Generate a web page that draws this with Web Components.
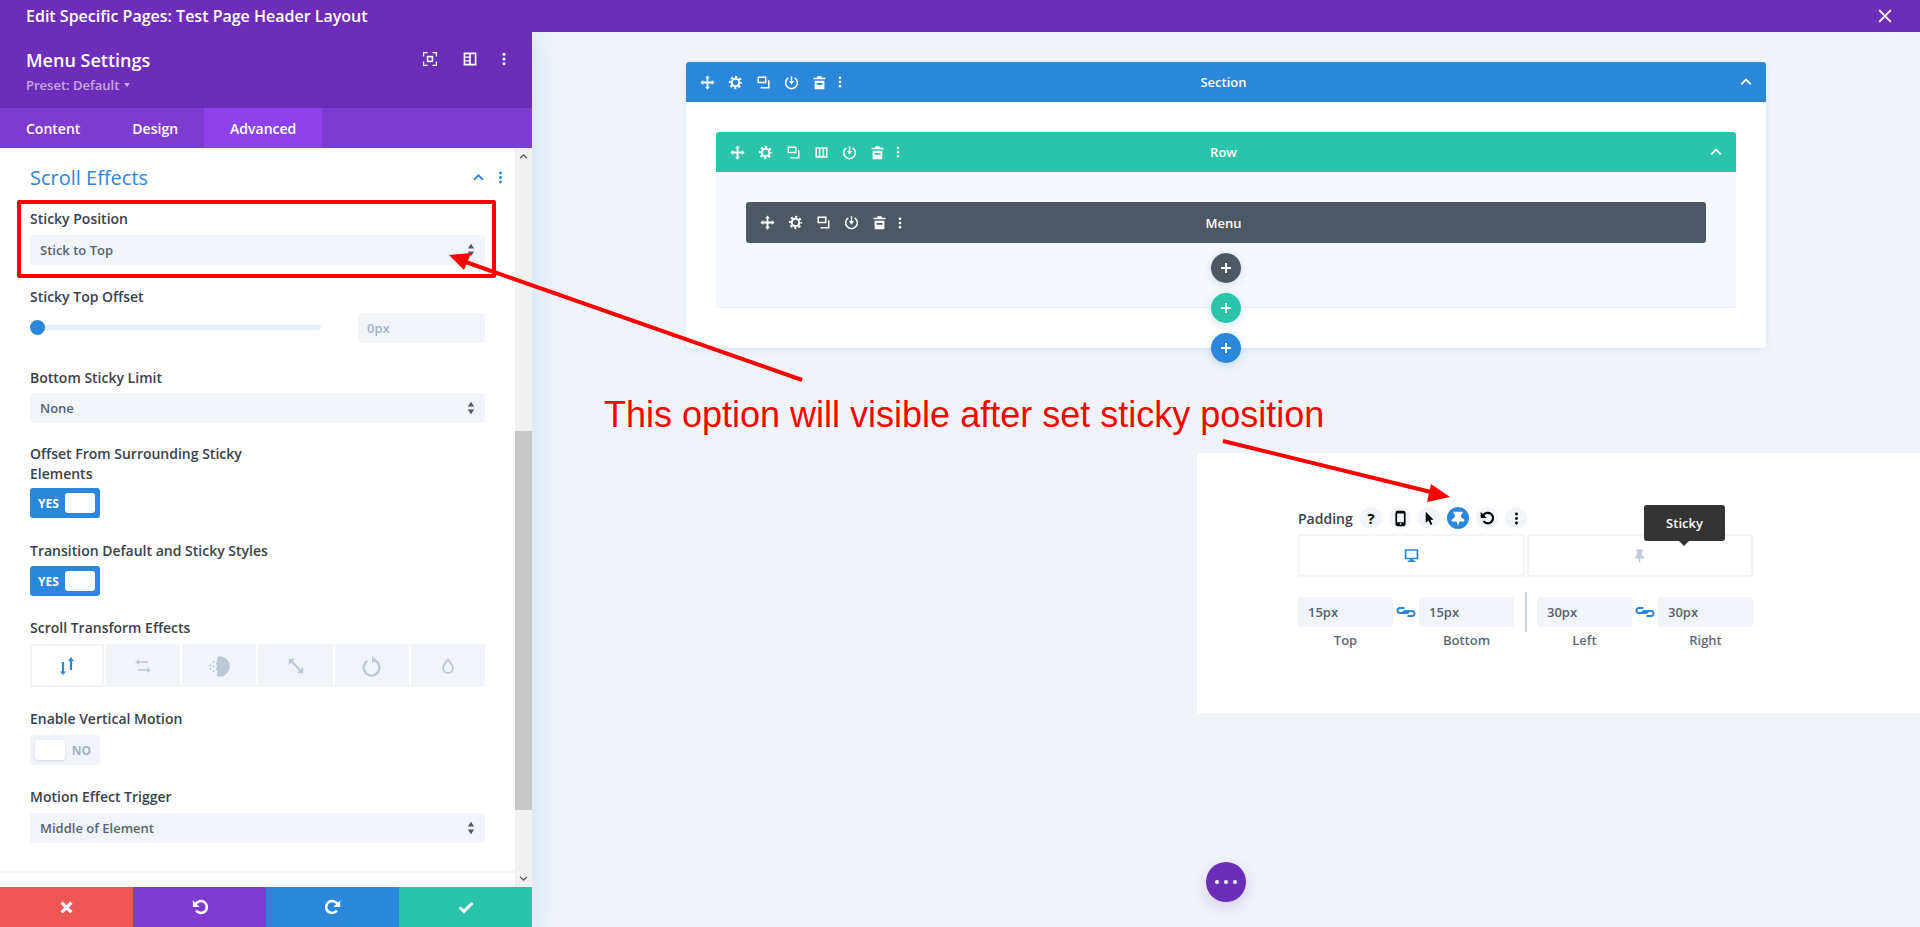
<!DOCTYPE html>
<html>
<head>
<meta charset="utf-8">
<title>Menu Settings</title>
<style>
  html, body { margin: 0; padding: 0; height: 100%; overflow: hidden; }
  body { font-family: "Open Sans", "Liberation Sans", sans-serif; font-size: 13px; color: #32373c; background: #f0f4f9; }
</style>
</head>
<body>
<dv-app></dv-app>

<script>
// icon shapes, all drawn on a 20x20 box
const ICONS = {
  move: `<path d="M10 .5l3.200 3.800h-2V8.800h4.500v-2L19.500 10l-3.800 3.200v-2h-4.500v4.500h2L10 19.500l-3.200-3.800h2v-4.500H4.300v2L.5 10l3.800-3.200v2h4.500V4.300h-2z"/>`,
  gear: `<circle cx="10" cy="10" r="5" fill="none" stroke="currentColor" stroke-width="2.700"/><circle cx="10" cy="10" r="7.500" fill="none" stroke="currentColor" stroke-width="2.800" stroke-dasharray="2.900 2.990" stroke-dashoffset="1.450"/>`,
  copy: `<path fill-rule="evenodd" d="M2 2h12v9H2zM4 4v5h8V4z"/><path d="M16 7h2v11H6v-2h10z"/>`,
  power: `<path fill="none" stroke="currentColor" stroke-width="2" d="M5.800 3.800a7.800 7.800 0 1 0 8.400 0"/><path d="M9 1.500h2V8h2.500L10 13 6.500 8H9z"/>`,
  trash: `<path d="M7 1.500h6v2h5v2.200H2V3.500h5z"/><path fill-rule="evenodd" d="M3.500 7.500h13V19h-13zM6 10.500V13h8v-2.500z"/>`,
  dots: `<circle cx="10" cy="4" r="1.900"/><circle cx="10" cy="10" r="1.900"/><circle cx="10" cy="16" r="1.900"/>`,
  columns: `<path fill-rule="evenodd" d="M2 3h16v14H2zM4 5v10h2.500V5zM8.500 5v10h3V5zM13.500 5v10H16V5z"/>`,
  up: `<path fill="none" stroke="currentColor" stroke-width="2.400" d="M4 13l6-6 6 6"/>`,
  down: `<path fill="none" stroke="currentColor" stroke-width="2.400" d="M4 7l6 6 6-6"/>`,
  focus: `<path fill="none" stroke="currentColor" stroke-width="1.600" d="M7 2H2v5M13 2h5v5M7 18H2v-5M13 18h5v-5"/><rect x="7" y="7" width="6" height="6" fill="none" stroke="currentColor" stroke-width="2"/>`,
  split: `<path fill-rule="evenodd" d="M2 2h16v16H2zM4 4v3h5V4zM4 8.500v3h5v-3zM4 13v3h5v-3zM11 4v12h5V4z"/>`,
  close: `<path fill="none" stroke="currentColor" stroke-width="2" d="M3.500 3.500l13 13M16.500 3.500l-13 13"/>`,
  x: `<path fill="none" stroke="currentColor" stroke-width="4.400" d="M3.500 3.500l13 13M16.500 3.500l-13 13"/>`,
  undo: `<path fill="none" stroke="currentColor" stroke-width="3.200" d="M4.500 6.500a7.500 7.500 0 1 1 .6 8"/><path d="M1 1.500l0 8.500h8.500z"/>`,
  redo: `<path fill="none" stroke="currentColor" stroke-width="3.200" d="M15.500 6.500a7.500 7.500 0 1 0-.6 8"/><path d="M19 1.500V10h-8.500z"/>`,
  check: `<path fill="none" stroke="currentColor" stroke-width="3.800" d="M2 10.500l5.500 5L18 5"/>`,
  updown: `<path d="M4.900 6h2.200v9.500H9L6 19 3 15.500h1.900z"/><path d="M12.900 5H11l3-4 3 4h-1.900v9h-2.200z"/>`,
  leftright: `<path d="M2 6l4-3v2.200h9v1.600H6V9z"/><path d="M18 14l-4 3v-2.200H5v-1.600h9V11z"/>`,
  fade: `<path d="M10 1a9 9 0 0 1 0 18c-1.500 0-2.500-1-2.500-2.200 0-1 .8-1.300.8-2.300s-1.300-1-1.300-2.200.8-1.300.8-2.300-.8-1.200-.8-2.300.8-1.300.8-2.300S8 3.300 8 2.500 9 1 10 1z"/><g><circle cx="4.800" cy="6" r=".9"/><circle cx="2" cy="9" r=".9"/><circle cx="4.800" cy="10" r="1"/><circle cx="2" cy="12" r=".9"/><circle cx="4.800" cy="14" r="1"/></g>`,
  scale: `<path fill="none" stroke="currentColor" stroke-width="2.400" d="M4.500 4.500l11 11"/><path d="M2 2h7L2 9zM18 18h-7l7-7z"/>`,
  rotate: `<path fill="none" stroke="currentColor" stroke-width="2.200" d="M6 4.800a7.500 7.500 0 1 0 5.500-1"/><path d="M10.500 0v7l4-3.500z"/>`,
  drop: `<path fill="none" stroke="currentColor" stroke-width="2" d="M10 2.500c3 4 5.500 6.800 5.500 9.800a5.500 5.500 0 0 1-11 0c0-3 2.500-5.800 5.500-9.800z"/>`,
  phone: `<path fill-rule="evenodd" d="M6.500 1h7A2.500 2.500 0 0 1 16 3.500v13a2.500 2.500 0 0 1-2.500 2.500h-7A2.500 2.500 0 0 1 4 16.500v-13A2.500 2.500 0 0 1 6.500 1zM6 4v10.500h8V4zM10 15.300a1 1 0 1 0 0 2 1 1 0 0 0 0-2z"/>`,
  cursor: `<path d="M5 1l10.500 10.500h-4.300l2.500 6-2.400 1-2.500-6L5 15.500z"/>`,
  pin: `<path d="M5.500 2h9v2l-1.500 1v4l3 3v2h-5v5h-2v-5H4v-2l3-3V5L5.500 4z"/>`,
  pinfat: `<path d="M5 3h10v2l-1.500 1v3l3.500 3v2h-5.500L10 18.500 8.500 14H3v-2l3.500-3V6L5 5z"/>`,
  monitor: `<path fill-rule="evenodd" d="M2 2.500h16v12h-6v1.500h2.500v1.500h-9V16H8v-1.500H2zM4 4.500v8h12v-8z"/>`,
  link: `<path fill="none" stroke="currentColor" stroke-width="2" d="M8.500 6H4a2.500 2.500 0 0 0 0 5h6.500a2.500 2.500 0 0 0 2.500-2"/><path fill="none" stroke="currentColor" stroke-width="2" d="M11.500 14H16a2.500 2.500 0 0 0 0-5H9.500A2.500 2.500 0 0 0 7 11"/>`,
  updownsmall: `<path d="M10 1l4.500 7h-9zM10 19l-4.500-7h9z"/>`
};

class DvIcon extends HTMLElement {
  constructor() {
    super();
    this.shadowDOM = this.attachShadow({mode: "open"});
  }
  connectedCallback() {
    const size = this.getAttribute("size") || 16;
    this.shadowDOM.innerHTML = `
      <style>
        :host { display: inline-flex; width: ${size}px; height: ${size}px; flex: none; }
        svg { display: block; width: 100%; height: 100%; fill: currentColor; }
      </style>
      <svg viewBox="0 0 20 20">${ICONS[this.getAttribute("name")]}</svg>`;
  }
}
customElements.define("dv-icon", DvIcon);

// top purple strip
class DvTitlebar extends HTMLElement {
  constructor() {
    super();
    this.shadowDOM = this.attachShadow({mode: "open"});
    this.shadowDOM.innerHTML = `
      <style>
        :host { display: flex; align-items: center; justify-content: space-between; height: 32px; padding: 0 26px;
                background: #6c2eb9; color: #fff; font-size: 16px; font-weight: 600; position: relative; z-index: 3; }
      </style>
      <slot></slot>
      <dv-icon name="close" size="18"></dv-icon>`;
  }
}
customElements.define("dv-titlebar", DvTitlebar);

class DvField extends HTMLElement {
  constructor() {
    super();
    this.shadowDOM = this.attachShadow({mode: "open"});
    this.shadowDOM.innerHTML = `
      <style>
        :host { display: block; }
        label { display: block; font-size: 14px; font-weight: 600; line-height: 20px; color: #3a4149; }
        div { margin-top: var(--gap, 6px); }
      </style>
      <label><slot name="label"></slot></label>
      <div><slot></slot></div>`;
  }
}
customElements.define("dv-field", DvField);

class DvSelect extends HTMLElement {
  constructor() {
    super();
    this.shadowDOM = this.attachShadow({mode: "open"});
    this.shadowDOM.innerHTML = `
      <style>
        :host { display: flex; align-items: center; justify-content: space-between; height: 30px; padding: 0 7px 0 10px;
                background: #f1f5f9; border-radius: 3px; color: #566270; font-size: 13px; font-weight: 600; }
      </style>
      <slot></slot>
      <dv-icon name="updownsmall" size="14" style="color:#4c5866"></dv-icon>`;
  }
}
customElements.define("dv-select", DvSelect);

class DvRange extends HTMLElement {
  constructor() {
    super();
    this.shadowDOM = this.attachShadow({mode: "open"});
    this.shadowDOM.innerHTML = `
      <style>
        :host { display: flex; align-items: center; justify-content: space-between; height: 30px; }
        .track { width: 291px; height: 5px; margin-top: -2px; border-radius: 3px; background: #e9eff6; display: flex; align-items: center; }
        .thumb { width: 15px; height: 15px; border-radius: 50%; background: #2b87da; }
        .val { width: 127px; height: 30px; box-sizing: border-box; padding: 0 9px; line-height: 31px; background: #f1f5f9;
               border-radius: 3px; color: #a3b0c2; font-size: 13px; font-weight: 600; }
      </style>
      <div class="track"><div class="thumb"></div></div>
      <div class="val"><slot></slot></div>`;
  }
}
customElements.define("dv-range", DvRange);

class DvToggle extends HTMLElement {
  constructor() {
    super();
    this.shadowDOM = this.attachShadow({mode: "open"});
  }
  connectedCallback() {
    const on = this.hasAttribute("on");
    this.shadowDOM.innerHTML = `
      <style>
        :host { display: flex; align-items: center; width: 70px; height: 30px; box-sizing: border-box; padding: 5px;
                border-radius: 3px; font-size: 12px; font-weight: 700;
                justify-content: space-between; flex-direction: ${on ? "row" : "row-reverse"};
                background: ${on ? "#2b87da" : "#f1f5f9"}; color: ${on ? "#fff" : "#a3b0c2"}; }
        span { padding: ${on ? "0 0 0 3px" : "0 4px 0 0"}; }
        i { display: block; width: 30px; height: 20px; border-radius: 3px; background: #fff;
            box-shadow: ${on ? "none" : "0 1px 3px rgba(0,0,0,.12)"}; }
      </style>
      <span><slot></slot></span><i></i>`;
  }
}
customElements.define("dv-toggle", DvToggle);

class DvEffectTabs extends HTMLElement {
  constructor() {
    super();
    this.shadowDOM = this.attachShadow({mode: "open"});
    const names = [["updown", 20], ["leftright", 20], ["fade", 23], ["scale", 18], ["rotate", 21], ["drop", 18]];
    this.shadowDOM.innerHTML = `
      <style>
        :host { display: grid; grid-template-columns: repeat(6, 1fr); column-gap: 2px; border-bottom: 2px solid #f1f5f9; }
        div { height: 41px; background: #f1f5f9; color: #bdc9d8; display: flex; align-items: center; justify-content: center; padding-top: 3px; box-sizing: border-box; }
        div.on { background: #fff; color: #2b87da; border: 2px solid #f1f5f9; border-bottom: 0; padding-top: 1px; }
      </style>
      ${names.map((n, i) => `<div class="${i == 0 ? "on" : ""}"><dv-icon name="${n[0]}" size="${n[1]}"></dv-icon></div>`).join("")}`;
  }
}
customElements.define("dv-effect-tabs", DvEffectTabs);

class DvScrollbar extends HTMLElement {
  constructor() {
    super();
    this.shadowDOM = this.attachShadow({mode: "open"});
    this.shadowDOM.innerHTML = `
      <style>
        :host { display: flex; flex-direction: column; width: 17px; flex: none; background: #f1f1f1; color: #505050; position: relative; }
        .btn { height: 17px; display: flex; align-items: center; justify-content: center; background: #f1f1f1; }
        .rail { flex: 1; padding-top: 266px; }
        .thumb { height: 379px; background: #c8c8c8; }
      </style>
      <div class="btn"><dv-icon name="up" size="11"></dv-icon></div>
      <div class="rail"><div class="thumb"></div></div>
      <div class="btn"><dv-icon name="down" size="11"></dv-icon></div>`;
  }
}
customElements.define("dv-scrollbar", DvScrollbar);

// left settings panel
class DvSettings extends HTMLElement {
  constructor() {
    super();
    this.shadowDOM = this.attachShadow({mode: "open"});
    this.shadowDOM.innerHTML = `
      <style>
        :host { display: flex; flex-direction: column; width: 532px; flex: none; background: #fff; position: relative; z-index: 2;
                box-shadow: 0 5px 30px rgba(43,135,218,.2); }
        .head { height: 76px; box-sizing: border-box; background: #6c2eb9; color: #fff; padding: 15px 26px 0; display: flex; justify-content: space-between; }
        h2 { margin: 0; font-size: 18px; font-weight: 600; line-height: 26px; }
        .preset { font-size: 13px; font-weight: 600; line-height: 24px; margin-top: 0; color: #c7a9ec; display: flex; align-items: center; gap: 5px; }
        .preset i { width: 0; height: 0; border: 3px solid transparent; border-top: 4px solid #c7a9ec; border-bottom: 0; }
        .tools { display: flex; align-items: flex-start; padding: 4px 0 0; margin-right: -6px; }
        .tools dv-icon + dv-icon { margin-left: 24px; }
        .tools dv-icon + dv-icon + dv-icon { margin-left: 18px; }
        .tabs { height: 40px; background: #7e3bd0; color: #fff; display: flex; font-size: 14px; font-weight: 600; line-height: 41px; }
        .tabs span { padding: 0 26px; }
        .tabs .on { background: #8f42ec; }
        .middle { flex: 1; display: flex; min-height: 0; }
        .scroll { flex: 1; min-width: 0; }
        .group { padding: 0 30px 0 30px; height: 725px; box-sizing: border-box; border-bottom: 2px solid #f1f5f9; }
        .group-head { display: flex; align-items: center; justify-content: space-between; height: 30px; padding-top: 14px; margin-bottom: 17px; color: #2b87da; margin-right: -23px; }
        .group-head h3 { margin: 0; font-size: 20px; font-weight: 400; }
        .group-head div { display: flex; align-items: center; gap: 7px; }
        .foot { height: 40px; display: grid; grid-template-columns: repeat(4, 1fr); color: #fff; flex: none; }
        .foot div { display: flex; align-items: center; justify-content: center; }
      </style>
      <div class="head">
        <div><h2>Menu Settings</h2><div class="preset">Preset: Default <i></i></div></div>
        <div class="tools">
          <dv-icon name="focus" size="16"></dv-icon>
          <dv-icon name="split" size="16"></dv-icon>
          <dv-icon name="dots" size="16"></dv-icon>
        </div>
      </div>
      <div class="tabs"><span>Content</span><span>Design</span><span class="on">Advanced</span></div>
      <div class="middle">
        <div class="scroll">
          <div class="group">
            <div class="group-head">
              <h3>Scroll Effects</h3>
              <div><dv-icon name="up" size="15"></dv-icon><dv-icon name="dots" size="15"></dv-icon></div>
            </div>
            <slot></slot>
          </div>
        </div>
        <dv-scrollbar></dv-scrollbar>
      </div>
      <div class="foot">
        <div style="background:#ef5555"><dv-icon name="x" size="15"></dv-icon></div>
        <div style="background:#7e3bd0"><dv-icon name="undo" size="16"></dv-icon></div>
        <div style="background:#2b87da"><dv-icon name="redo" size="16"></dv-icon></div>
        <div style="background:#29c4a9"><dv-icon name="check" size="16"></dv-icon></div>
      </div>`;
  }
}
customElements.define("dv-settings", DvSettings);

// builder bar for section, row and module
class DvBar extends HTMLElement {
  constructor() {
    super();
    this.shadowDOM = this.attachShadow({mode: "open"});
  }
  connectedCallback() {
    const tools = (this.getAttribute("tools") || "move gear copy power trash").split(" ");
    const chev = this.hasAttribute("chevron");
    this.shadowDOM.innerHTML = `
      <style>
        :host { display: grid; grid-template-columns: 1fr auto 1fr; align-items: center; height: var(--bar-h, 40px); padding: 0 12px 0 7px;
                background: var(--bar); color: #fff; font-size: 13px; font-weight: 600; border-radius: var(--bar-radius, 3px 3px 0 0); }
        .tools { display: flex; align-items: center; }
        .tools span { width: 28px; display: flex; justify-content: center; align-items: center; }
        .tools span:last-child { width: 14px; }
        .end { display: flex; justify-content: flex-end; }
      </style>
      <div class="tools">
        ${tools.map(n => `<span><dv-icon name="${n}" size="15"></dv-icon></span>`).join("")}
        <span><dv-icon name="dots" size="14"></dv-icon></span>
      </div>
      <div><slot></slot></div>
      <div class="end">${chev ? `<dv-icon name="up" size="16"></dv-icon>` : ""}</div>`;
  }
}
customElements.define("dv-bar", DvBar);

class DvAdd extends HTMLElement {
  constructor() {
    super();
    this.shadowDOM = this.attachShadow({mode: "open"});
    this.shadowDOM.innerHTML = `
      <style>
        :host { display: flex; align-items: center; justify-content: center; width: 30px; height: 30px; border-radius: 50%;
                background: var(--add); box-shadow: 0 2px 10px var(--add-shadow, rgba(43,135,218,.25)); }
        svg { width: 12px; height: 12px; }
      </style>
      <svg viewBox="0 0 12 12"><path d="M5 1h2v4h4v2H7v4H5V7H1V5h4z" fill="#fff"/></svg>`;
  }
}
customElements.define("dv-add", DvAdd);

// section / row / module stack in the canvas
class DvStack extends HTMLElement {
  constructor() {
    super();
    this.shadowDOM = this.attachShadow({mode: "open"});
    this.shadowDOM.innerHTML = `
      <style>
        :host { display: block; width: 1080px; margin-left: 154px; background: #fff; border-radius: 3px; position: relative;
                box-shadow: 0 2px 6px rgba(43,135,218,.12); }
        .body { padding: 30px 30px 41px; }
        .row { background: #f5f9fd; position: relative; border-radius: 3px; box-shadow: 0 1px 1px #eaf0f6; }
        .row-body { padding: 30px 30px 0; height: 105px; }
        .dark { margin: 10px auto 0; }
        .green, .blue { position: absolute; left: 50%; margin-left: -15px; }
        .green { bottom: -16px; }
        .blue { bottom: -15px; }
      </style>
      <dv-bar style="--bar:#2b87da" chevron>Section</dv-bar>
      <div class="body">
        <div class="row">
          <dv-bar style="--bar:#29c4a9" tools="move gear copy columns power trash" chevron>Row</dv-bar>
          <div class="row-body">
            <dv-bar style="--bar:#4c5866;--bar-radius:3px;--bar-h:41px">Menu</dv-bar>
            <dv-add class="dark" style="--add:#4c5866;--add-shadow:rgba(0,0,0,.12)"></dv-add>
          </div>
          <dv-add class="green" style="--add:#29c4a9"></dv-add>
        </div>
      </div>
      <dv-add class="blue" style="--add:#2b87da"></dv-add>`;
  }
}
customElements.define("dv-stack", DvStack);

class DvRound extends HTMLElement {
  constructor() {
    super();
    this.shadowDOM = this.attachShadow({mode: "open"});
    this.shadowDOM.innerHTML = `
      <style>
        :host { display: flex; align-items: center; justify-content: center; width: 22px; height: 22px; border-radius: 50%;
                background: #f1f5f9; color: #000; font-size: 15px; font-weight: 700; }
        :host([active]) { background: #2b87da; color: #fff; }
      </style>
      <slot></slot>`;
  }
}
customElements.define("dv-round", DvRound);

class DvNum extends HTMLElement {
  constructor() {
    super();
    this.shadowDOM = this.attachShadow({mode: "open"});
    this.shadowDOM.innerHTML = `
      <style>
        :host { display: block; width: 95px; text-align: center; color: #5c6978; font-size: 13px; font-weight: 600; }
        div { height: 30px; line-height: 31px; text-align: left; padding-left: 10px; box-sizing: border-box; background: #f1f5f9; border-radius: 3px; color: #566270; margin-bottom: 4px; }
        p { margin: 0; line-height: 18px; }
      </style>
      <div><slot></slot></div>
      <p>${this.getAttribute("label")}</p>`;
  }
}
customElements.define("dv-num", DvNum);

// white padding screenshot card
class DvPaddingCard extends HTMLElement {
  constructor() {
    super();
    this.shadowDOM = this.attachShadow({mode: "open"});
    this.shadowDOM.innerHTML = `
      <style>
        :host { display: block; box-sizing: border-box; width: 723px; height: 260px; margin: 105px 0 0 665px; padding: 54px 0 0 101px; background: #fff; position: relative; }
        .label { display: flex; align-items: center; height: 22px; font-size: 14px; font-weight: 600; color: #3a4149; }
        .label span { width: 62px; }
        .label dv-round + dv-round { margin-left: 7px; }
        .tabs { display: flex; gap: 2px; width: 455px; margin-top: 5px; }
        .tabs div { flex: 1; height: 43px; box-sizing: border-box; border: 2px solid #f1f5f9; display: flex; align-items: center; justify-content: center; }
        .nums { display: flex; width: 455px; margin-top: 20px; align-items: flex-start; }
        .chain { width: 26px; padding-top: 5px; color: #2b87da; display: flex; justify-content: center; flex: none; }
        .sep { width: 2px; height: 40px; background: #c9d2de; margin: -5px 10px 0 11px; flex: none; }
        .tip { position: absolute; left: 447px; top: 52px; width: 81px; height: 36px; line-height: 36px; text-align: center; border-radius: 3px; background: #333; color: #fff; font-size: 13px; font-weight: 600; }
        .tip::after { content: ""; position: absolute; left: 35px; top: 36px; border: 5px solid transparent; border-top-color: #333; border-bottom: 0; }
      </style>
      <div class="label">
        <span>Padding</span>
        <dv-round>?</dv-round>
        <dv-round><dv-icon name="phone" size="17"></dv-icon></dv-round>
        <dv-round><dv-icon name="cursor" size="15"></dv-icon></dv-round>
        <dv-round active><dv-icon name="pinfat" size="18"></dv-icon></dv-round>
        <dv-round><dv-icon name="undo" size="14"></dv-icon></dv-round>
        <dv-round><dv-icon name="dots" size="15"></dv-icon></dv-round>
      </div>
      <div class="tabs">
        <div style="color:#2b87da"><dv-icon name="monitor" size="17"></dv-icon></div>
        <div style="color:#bdc9d8"><dv-icon name="pin" size="15"></dv-icon></div>
      </div>
      <div class="nums">
        <dv-num label="Top">15px</dv-num>
        <span class="chain"><dv-icon name="link" size="20"></dv-icon></span>
        <dv-num label="Bottom">15px</dv-num>
        <span class="sep"></span>
        <dv-num label="Left">30px</dv-num>
        <span class="chain"><dv-icon name="link" size="20"></dv-icon></span>
        <dv-num label="Right">30px</dv-num>
      </div>
      <div class="tip">Sticky</div>`;
  }
}
customElements.define("dv-padding-card", DvPaddingCard);

// red annotation drawn over the screenshot
class DvAnnotations extends HTMLElement {
  constructor() {
    super();
    this.shadowDOM = this.attachShadow({mode: "open"});
    this.shadowDOM.innerHTML = `
      <style>
        :host { display: block; position: absolute; inset: 0; z-index: 5; pointer-events: none; }
        svg { position: absolute; left: 0; top: 0; }
        .box { position: absolute; left: 17px; top: 200px; width: 479px; height: 78px; box-sizing: border-box; border: 4px solid #fe0000; border-radius: 2px; }
        .note { position: absolute; left: 604px; top: 393px; font-family: "Liberation Sans", Arial, sans-serif; font-size: 36px; line-height: 44px; color: #fe0000; white-space: nowrap; }
      </style>
      <div class="box"></div>
      <svg width="1920" height="927">
        <path d="M802 380L460 260" stroke="#fe0000" stroke-width="4"/>
        <path d="M449 255L471 253L464 270z" fill="#fe0000"/>
        <path d="M1223 441L1435 493" stroke="#fe0000" stroke-width="4"/>
        <path d="M1450 497L1427 502L1431 484z" fill="#fe0000"/>
      </svg>
      <div class="note"><slot></slot></div>`;
  }
}
customElements.define("dv-annotations", DvAnnotations);

class DvApp extends HTMLElement {
  constructor() {
    super();
    this.shadowDOM = this.attachShadow({mode: "open"});
    this.shadowDOM.innerHTML = `
      <style>
        :host { display: flex; flex-direction: column; height: 927px; position: relative; overflow: hidden; }
        .main { flex: 1; display: flex; min-height: 0; }
        .canvas { flex: 1; padding-top: 30px; position: relative; min-width: 0; }
        dv-field { margin-top: var(--top, 21px); }
        .fab { position: absolute; left: 674px; top: 830px; width: 40px; height: 40px; border-radius: 50%; background: #6c2eb9;
               box-shadow: 0 5px 15px rgba(108,46,185,.2); display: flex; align-items: center; justify-content: center; gap: 5px; }
        .fab i { width: 4px; height: 4px; border-radius: 50%; background: #fff; }
      </style>
      <dv-titlebar>Edit Specific Pages: Test Page Header Layout</dv-titlebar>
      <div class="main">
        <dv-settings>
          <dv-field style="--top:0px"><span slot="label">Sticky Position</span><dv-select>Stick to Top</dv-select></dv-field>
          <dv-field style="--top:22px;--gap:6px"><span slot="label">Sticky Top Offset</span><dv-range>0px</dv-range></dv-field>
          <dv-field style="--top:25px;--gap:5px"><span slot="label">Bottom Sticky Limit</span><dv-select>None</dv-select></dv-field>
          <dv-field style="--gap:4px"><span slot="label">Offset From Surrounding Sticky<br>Elements</span><dv-toggle on>YES</dv-toggle></dv-field>
          <dv-field style="--top:23px;--gap:5px"><span slot="label">Transition Default and Sticky Styles</span><dv-toggle on>YES</dv-toggle></dv-field>
          <dv-field style="--top:22px"><span slot="label">Scroll Transform Effects</span><dv-effect-tabs></dv-effect-tabs></dv-field>
          <dv-field style="--top:22px"><span slot="label">Enable Vertical Motion</span><dv-toggle>NO</dv-toggle></dv-field>
          <dv-field style="--top:22px"><span slot="label">Motion Effect Trigger</span><dv-select>Middle of Element</dv-select></dv-field>
        </dv-settings>
        <div class="canvas">
          <dv-stack></dv-stack>
          <dv-padding-card></dv-padding-card>
          <div class="fab"><i></i><i></i><i></i></div>
        </div>
      </div>
      <dv-annotations>This option will visible after set sticky position</dv-annotations>`;
  }
}
customElements.define("dv-app", DvApp);
</script>
</body>
</html>
